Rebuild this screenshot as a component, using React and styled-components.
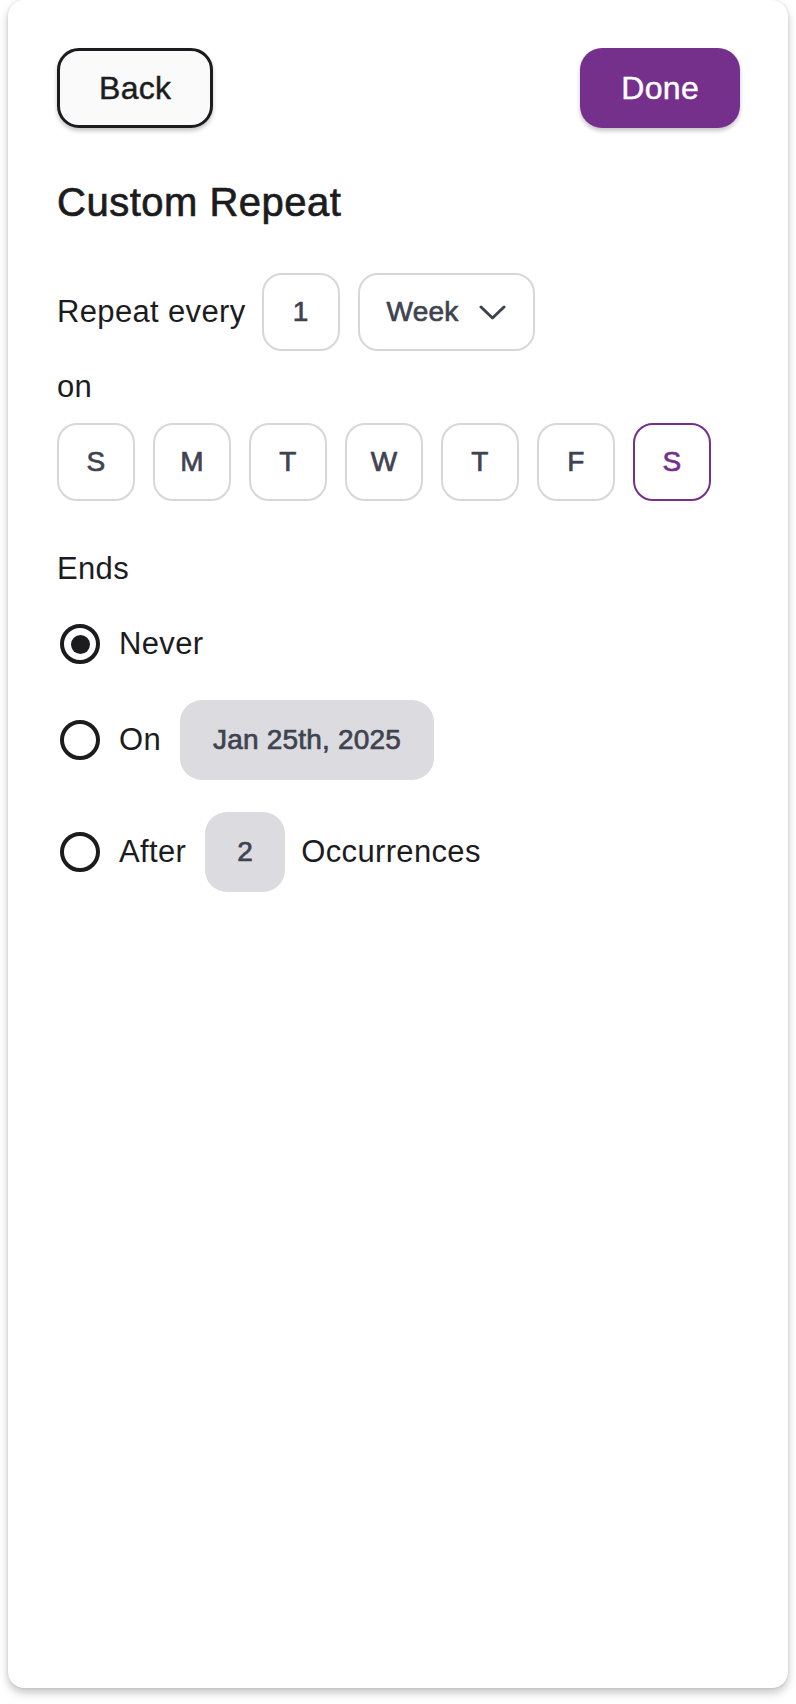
import React from "react";
import styled, { createGlobalStyle } from "styled-components";

const GlobalStyle = createGlobalStyle`
  html, body {
    margin: 0;
    padding: 0;
    background: #ffffff;
  }
  body {
    font-family: "Liberation Sans", Arial, Helvetica, sans-serif;
    color: #1c1c1f;
  }
  * { box-sizing: border-box; }
`;

const Page = styled.div`
  padding: 0 8px 16px;
`;

const Card = styled.div`
  height: 1688px;
  background: #ffffff;
  border-radius: 16px;
  box-shadow: 0 5px 8px rgba(0, 0, 0, 0.22), 0 0 3px rgba(0, 0, 0, 0.12);
  padding: 48px 48px 0 49px;
  display: flex;
  flex-direction: column;
`;

const Header = styled.div`
  display: flex;
  justify-content: space-between;
  align-items: center;
`;

const Button = styled.button`
  height: 80px;
  padding: 0 ${(p) => (p.$primary ? "41px" : "39px")};
  border-radius: 22px;
  font-family: inherit;
  font-size: 32px;
  line-height: 1;
  letter-spacing: 0.3px;
  -webkit-text-stroke: 0.45px currentColor;
  cursor: pointer;
  border: ${(p) => (p.$primary ? "none" : "3px solid #1c1c1f")};
  background: ${(p) => (p.$primary ? "#75308b" : "#fafafa")};
  color: ${(p) => (p.$primary ? "#ffffff" : "#1c1c1f")};
  box-shadow: 0 3px 4px rgba(0, 0, 0, 0.22);
`;

const Title = styled.h1`
  margin: 50px 0 0;
  font-size: 40px;
  line-height: 48px;
  font-weight: 400;
  letter-spacing: 0.5px;
  -webkit-text-stroke: 0.7px #1c1c1f;
  color: #1c1c1f;
`;

const Row = styled.div`
  display: flex;
  align-items: center;
  gap: ${(p) => p.$gap || 18}px;
  margin-top: ${(p) => p.$top || 0}px;
`;

const Label = styled.span`
  font-size: 31px;
  line-height: normal;
  letter-spacing: 0.35px;
  color: #1c1c1f;
  margin-right: ${(p) => p.$after || 0}px;
`;

const BlockLabel = styled.div`
  font-size: 31px;
  line-height: normal;
  letter-spacing: 0.35px;
  color: #1c1c1f;
  margin-top: ${(p) => p.$top || 0}px;
`;

const Box = styled.div`
  height: 78px;
  min-width: 78px;
  padding: 0 ${(p) => p.$pad || 0}px;
  border-radius: 20px;
  border: 2px solid ${(p) => (p.$active ? "#75308b" : "#d7d7db")};
  background: #ffffff;
  display: flex;
  align-items: center;
  justify-content: center;
  gap: 21px;
  font-size: 28px;
  line-height: 1;
  letter-spacing: 0.2px;
  color: ${(p) => (p.$active ? "#75308b" : "#3f4350")};
  -webkit-text-stroke: 0.7px currentColor;
`;

const Chevron = styled.svg`
  width: 27px;
  height: 15px;
  display: block;
`;

const Days = styled.div`
  display: flex;
  gap: 18px;
  margin-top: 18px;
`;

const Options = styled.div`
  display: flex;
  flex-direction: column;
  margin-top: 37px;
`;

const OptionRow = styled.div`
  display: flex;
  align-items: center;
  gap: 19px;
  min-height: ${(p) => p.$height || 40}px;
  margin-top: ${(p) => p.$top || 0}px;
`;

const Radio = styled.span`
  width: 40px;
  height: 40px;
  margin-left: 3px;
  border-radius: 50%;
  border: 4px solid #1c1c1f;
  display: flex;
  align-items: center;
  justify-content: center;
  flex-shrink: 0;
  &::after {
    content: "";
    width: 19px;
    height: 19px;
    border-radius: 50%;
    background: #1c1c1f;
    display: ${(p) => (p.$checked ? "block" : "none")};
  }
`;

const Pill = styled.div`
  height: 80px;
  min-width: 80px;
  padding: 0 ${(p) => p.$pad || 0}px;
  border-radius: 22px;
  background: #dcdbe0;
  display: flex;
  align-items: center;
  justify-content: center;
  font-size: 28px;
  line-height: 1;
  letter-spacing: 0.2px;
  color: #3f4350;
  -webkit-text-stroke: 0.7px currentColor;
  margin-right: ${(p) => p.$after || 0}px;
`;

const days = ["S", "M", "T", "W", "T", "F", "S"];

export default function App() {
  return (
    <>
      <GlobalStyle />
      <Page>
        <Card>
          <Header>
            <Button>Back</Button>
            <Button $primary>Done</Button>
          </Header>

          <Title>Custom Repeat</Title>

          <Row $top={47} $gap={18}>
            <Label $after={-2}>Repeat every</Label>
            <Box>1</Box>
            <Box $pad={27}>
              Week
              <Chevron viewBox="0 0 27 15" fill="none">
                <polyline
                  points="2,2 13.5,13 25,2"
                  stroke="#3f4350"
                  strokeWidth="3"
                  strokeLinecap="round"
                  strokeLinejoin="round"
                />
              </Chevron>
            </Box>
          </Row>

          <BlockLabel $top={18}>on</BlockLabel>
          <Days>
            {days.map((d, i) => (
              <Box key={i} $active={i === 6}>
                {d}
              </Box>
            ))}
          </Days>

          <BlockLabel $top={50}>Ends</BlockLabel>

          <Options>
            <OptionRow>
              <Radio $checked />
              <Label>Never</Label>
            </OptionRow>
            <OptionRow $top={36} $height={80}>
              <Radio />
              <Label>On</Label>
              <Pill $pad={33}>Jan 25th, 2025</Pill>
            </OptionRow>
            <OptionRow $top={32} $height={80}>
              <Radio />
              <Label>After</Label>
              <Pill $after={-3}>2</Pill>
              <Label>Occurrences</Label>
            </OptionRow>
          </Options>
        </Card>
      </Page>
    </>
  );
}
